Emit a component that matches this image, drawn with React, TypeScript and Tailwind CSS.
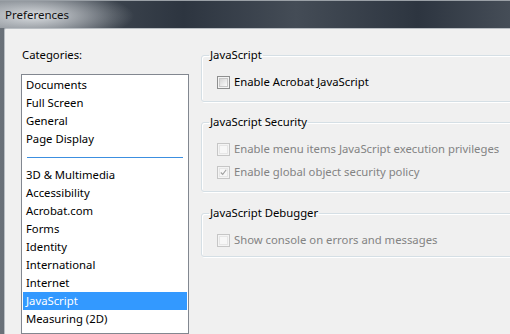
import React from "react";

const categories = [
  "Documents",
  "Full Screen",
  "General",
  "Page Display",
  "-",
  "3D & Multimedia",
  "Accessibility",
  "Acrobat.com",
  "Forms",
  "Identity",
  "International",
  "Internet",
  "JavaScript",
  "Measuring (2D)",
  "Measuring (3D)",
];

function CheckBox({ checked, disabled }: { checked?: boolean; disabled?: boolean }) {
  return (
    <span
      className={
        disabled
          ? "w-[13px] h-[13px] border border-[#c6c6c6] bg-[#f4f4f4] flex items-center justify-center shrink-0"
          : "w-[13px] h-[13px] border border-[#8e8f8f] bg-[#f4f4f4] flex items-center justify-center shrink-0"
      }
    >
      <span
        className={
          disabled
            ? "w-[9px] h-[9px] border border-[#e6e6e6] bg-[#f7f7f7] flex items-center justify-center"
            : "w-[9px] h-[9px] border border-[#c8c8c8] bg-gradient-to-br from-[#d6d6d6] to-[#fbfbfb] flex items-center justify-center"
        }
      >
        {checked && (
          <svg width="9" height="9" viewBox="0 0 9 9">
            <path d="M1 4.5 L3.5 7 L8 1" fill="none" stroke="#a0a0a0" strokeWidth="1.4" />
          </svg>
        )}
      </span>
    </span>
  );
}

function Option({ label, checked, disabled }: { label: React.ReactNode; checked?: boolean; disabled?: boolean }) {
  return (
    <div className="h-[18px] flex items-center gap-[4px] ml-[7px] whitespace-nowrap">
      <CheckBox checked={checked} disabled={disabled} />
      <span className={disabled ? "text-[#838383]" : "text-black"}>{label}</span>
    </div>
  );
}

function Group({ title, children, className }: { title: string; children: React.ReactNode; className?: string }) {
  return (
    <fieldset
      className={
        "border border-[#d5dfe5] rounded-[3px] pl-[8px] pt-[10px] shadow-[inset_1px_1px_0_#ffffff,1px_1px_0_#ffffff] " +
        (className ?? "")
      }
    >
      <legend className="px-[1px] -ml-[1px] leading-[16px] text-black">{title}</legend>
      {children}
    </fieldset>
  );
}

export default function App() {
  return (
    <div
      className="w-[510px] h-[334px] overflow-hidden flex flex-col text-[11.3px] bg-[linear-gradient(90deg,#6a7179_0%,#3b434d_22%,#2d3540_36%,#444c56_58%,#2d3540_82%,#454d57_100%)]"
      style={{ fontFamily: '"Noto Sans", sans-serif' }}
    >
      <div className="h-[28px] border-t border-[#9aa0a6] flex items-center pl-[5px] bg-[radial-gradient(ellipse_100px_26px_at_34px_15px,rgba(228,231,234,0.92),rgba(228,231,234,0)_100%)]">
        <span className="text-[#111] leading-[16px] text-[11.5px]">Preferences</span>
      </div>
      <div className="flex-1 flex pl-[4px] min-h-0">
        <div className="flex-1 bg-[#f0f0f0] border-t border-l border-[#b9bec3] rounded-tl-[2px] flex pt-[18px] pl-[16px] min-h-0">
          <div className="w-[168px] flex flex-col shrink-0">
            <div className="leading-[16px] pl-[1px] text-black">Categories:</div>
            <div className="mt-[11px] h-[300px] border border-[#828790] bg-white p-[1px] overflow-hidden">
              {categories.map((c, i) =>
                c === "-" ? (
                  <div key={i} className="h-[18px] flex items-center px-[4px]">
                    <div className="h-[1px] w-full bg-[#3c8fe0]" />
                  </div>
                ) : (
                  <div
                    key={i}
                    className={
                      c === "JavaScript"
                        ? "h-[18px] flex items-center pl-[3px] bg-[#3399ff] text-white"
                        : "h-[18px] flex items-center pl-[3px] text-black"
                    }
                  >
                    {c}
                  </div>
                )
              )}
            </div>
          </div>
          <div className="ml-[12px] w-[330px] shrink-0 flex flex-col">
            <Group title="JavaScript" className="pb-[10px]">
              <Option
                label={
                  <>
                    Enable Acrobat <span className="underline underline-offset-2">J</span>avaScript
                  </>
                }
              />
            </Group>
            <Group title="JavaScript Security" className="mt-[12px] pb-[10px]">
              <Option label="Enable menu items JavaScript execution privileges" disabled />
              <div className="h-[5px]" />
              <Option label="Enable global object security policy" checked disabled />
            </Group>
            <Group title="JavaScript Debugger" className="mt-[13px] pb-[7px]">
              <Option label="Show console on errors and messages" disabled />
            </Group>
          </div>
        </div>
      </div>
    </div>
  );
}
